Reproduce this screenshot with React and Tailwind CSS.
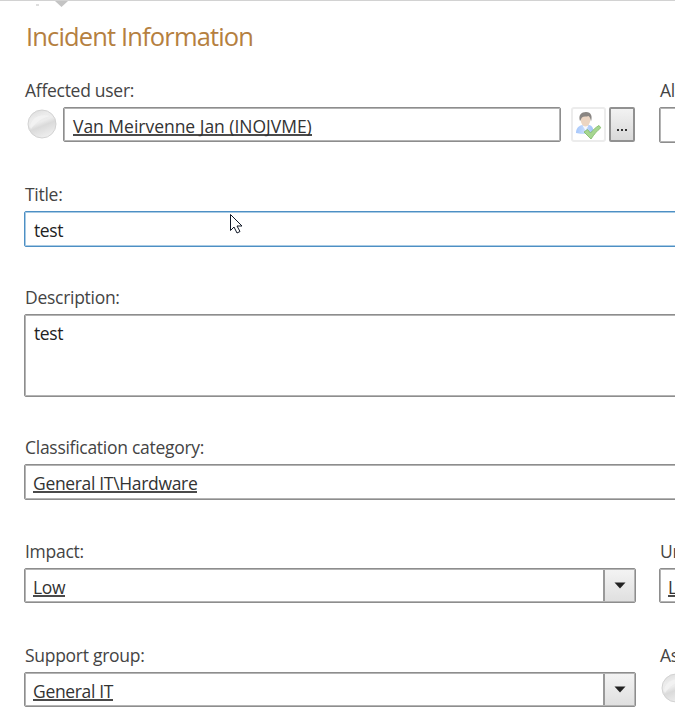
function Label({ children, className = "" }) {
  return (
    <div className={`h-7 text-[17.5px] leading-[22px] tracking-[-0.28px] whitespace-nowrap text-[#444] ${className}`}>
      {children}
    </div>
  );
}

function Link({ children, className = "tracking-[-0.33px]" }) {
  return (
    <span className={`block h-[20px] w-fit self-start border-b-2 border-[#4a4a4a] text-[17.5px] leading-[21px] whitespace-nowrap text-[#333] ${className}`}>
      {children}
    </span>
  );
}

function Presence() {
  return (
    <svg className="h-[30px] w-[30px] shrink-0" viewBox="0 0 30 30">
      <defs>
        <linearGradient id="orb" x1="0.2" y1="0" x2="0.6" y2="1">
          <stop offset="0" stopColor="#dcdcdc" />
          <stop offset="0.25" stopColor="#ebebeb" />
          <stop offset="0.45" stopColor="#ececec" />
          <stop offset="0.6" stopColor="#dadada" />
          <stop offset="1" stopColor="#efefef" />
        </linearGradient>
      </defs>
      <circle cx="15" cy="15" r="14" fill="url(#orb)" stroke="#cfcfcf" strokeWidth="0.9" />
      <path d="M3 18C4 9 12 4 24 7c-6 1-14 4-20 13z" fill="#f6f6f6" opacity="0.6" />
    </svg>
  );
}

function UserCheck() {
  return (
    <div className="ml-[10px] flex h-[35px] w-[35px] shrink-0 items-center justify-center rounded-[3px] border-2 border-[#ececec] bg-white">
      <svg className="h-[30px] w-[29px]" viewBox="0 0 29 30">
        <defs>
          <linearGradient id="shirt" x1="0" y1="0" x2="1" y2="0">
            <stop offset="0" stopColor="#a5c6fb" />
            <stop offset="0.5" stopColor="#c9ddfd" />
            <stop offset="1" stopColor="#9dbff6" />
          </linearGradient>
        </defs>
        <path d="M2 23c0-5 3-7.500 6.500-8H15c3 .5 4.500 3 4.500 8-5 1.200-12 1.200-17.500 0z" fill="url(#shirt)" />
        <path d="M8.500 15.500l3 5 3-5z" fill="#f8fafe" />
        <ellipse cx="11.500" cy="10" rx="4.800" ry="6.400" fill="#ecd5c2" />
        <path d="M6 11C4 5 7.500 2 12 2c5.500 0 6.500 4.500 5 9.500-.5-2.500-1-4.500-2.500-5.500-2 1-5 0-6.500 1.500C6.800 9 7 10 6 11z" fill="#8a8683" />
        <path d="M10 22l3.500-2.500 3 3.500c3-3.500 5-5.500 8.500-7.500l1.800 2.300c-4 3.200-6.800 6.700-9.800 11.200z" fill="#a6d690" stroke="#86bd6e" strokeWidth="0.9" />
      </svg>
    </div>
  );
}

function Combo({ children }) {
  return (
    <div className="flex h-[35px] w-[612px] rounded-[2px] border border-[#8d8d8d] bg-white ring-1 ring-[#b4b4b4] ring-inset">
      <div className="flex-1 pt-[7.5px] pl-[8px]">{children}</div>
      <div className="m-px flex w-[31px] items-center justify-center border-l-2 border-[#999] bg-linear-to-b from-[#f3f3f3] to-[#e0e0e0]">
        <svg className="h-[7px] w-[12px]" viewBox="0 0 12 7">
          <path d="M0.500 0.500h11L6 6.500z" fill="#222" />
        </svg>
      </div>
    </div>
  );
}

export default function App() {
  return (
    <div className="relative h-[722px] w-[675px] overflow-hidden bg-white font-['Open_Sans','Noto_Sans',sans-serif]">
      <div className="flex h-[79px] flex-col border-t border-[#d2d2d2] pl-[26px]">
        <svg className="ml-[29px] h-[6px] w-[13px] shrink-0" viewBox="0 0 13 6">
          <path d="M0 0h13L6.500 6z" fill="#c4c4c4" />
        </svg>
        <h1 className="mt-[11px] text-[25.5px] leading-[36px] tracking-[-0.85px] whitespace-nowrap text-[#b5803f]">
          Incident Information
        </h1>
      </div>
      <svg className="absolute top-[4px] left-[36px] h-[2px] w-[3px]" viewBox="0 0 3 2">
        <path d="M0 0h3v2H0z" fill="#dedede" />
      </svg>

      <div className="flex w-[1200px] flex-col pl-[24px]">
        <div className="flex h-[103px]">
          <div className="w-[635px] shrink-0">
            <Label className="pl-px">Affected user:</Label>
            <div className="flex">
              <div className="mr-[6px] ml-[3px] pt-[2px]"><Presence /></div>
              <div className="flex h-[35px] w-[498px] rounded-[2px] border border-[#8d8d8d] pt-[8px] pl-[9px] ring-1 ring-[#b4b4b4] ring-inset">
                <Link className="tracking-[-0.02px]">Van Meirvenne Jan (INOJVME)</Link>
              </div>
              <UserCheck />
              <button className="ml-[3px] flex h-[35px] w-[26px] items-center justify-center gap-[2px] rounded-[2px] border-2 border-[#919191] bg-linear-to-b from-[#f2f2f2] to-[#d9d9d9] pt-[10px]">
                <span className="h-[2px] w-[2px] bg-[#333]" />
                <span className="h-[2px] w-[2px] bg-[#333]" />
                <span className="h-[2px] w-[2px] bg-[#333]" />
              </button>
            </div>
          </div>
          <div className="flex-1">
            <Label className="pl-px">Alternate contact:</Label>
            <div className="h-[36px] rounded-[2px] border border-[#8d8d8d] ring-1 ring-[#b4b4b4] ring-inset" />
          </div>
        </div>

        <div className="h-[104px] pt-px">
          <Label className="pl-px">Title:</Label>
          <div className="h-[36px] rounded-[2px] border border-[#4d8fc4] pt-[7px] pl-[9px] text-[17.5px] leading-[22px] tracking-[-0.4px] text-[#222] ring-1 ring-[#a9cbe4] ring-inset">test</div>
        </div>

        <div className="h-[150px]">
          <Label className="pl-px">Description:</Label>
          <div className="h-[83px] rounded-[2px] border border-[#8d8d8d] pt-[7px] pl-[9px] text-[17.5px] leading-[22px] tracking-[-0.4px] text-[#222] ring-1 ring-[#b4b4b4] ring-inset">test</div>
        </div>

        <div className="h-[104px]">
          <Label className="pl-px">Classification category:</Label>
          <div className="flex h-[36px] rounded-[2px] border border-[#8d8d8d] pt-[8px] pl-[8px] ring-1 ring-[#b4b4b4] ring-inset">
            <Link>General IT\Hardware</Link>
          </div>
        </div>

        <div className="flex h-[104px]">
          <div className="w-[635px] shrink-0">
            <Label className="pl-px">Impact:</Label>
            <Combo><Link>Low</Link></Combo>
          </div>
          <div className="flex-1">
            <Label className="pl-px">Urgency:</Label>
            <Combo><Link>Low</Link></Combo>
          </div>
        </div>

        <div className="flex h-[77px]">
          <div className="w-[635px] shrink-0">
            <Label className="pl-px">Support group:</Label>
            <Combo><Link>General IT</Link></Combo>
          </div>
          <div className="flex-1">
            <Label className="pl-px">Assigned to:</Label>
            <div className="pt-[1px] pl-[2px]"><Presence /></div>
          </div>
        </div>
      </div>

      <svg className="absolute top-[213px] left-[229px] h-[22px] w-[14px]" viewBox="0 0 14 22">
        <path d="M1.500 1.500v16l3.500-3.500 3 6 3-1.500-3-5.500h5z" fill="#fff" stroke="#111827" strokeWidth="1" />
      </svg>
    </div>
  );
}
